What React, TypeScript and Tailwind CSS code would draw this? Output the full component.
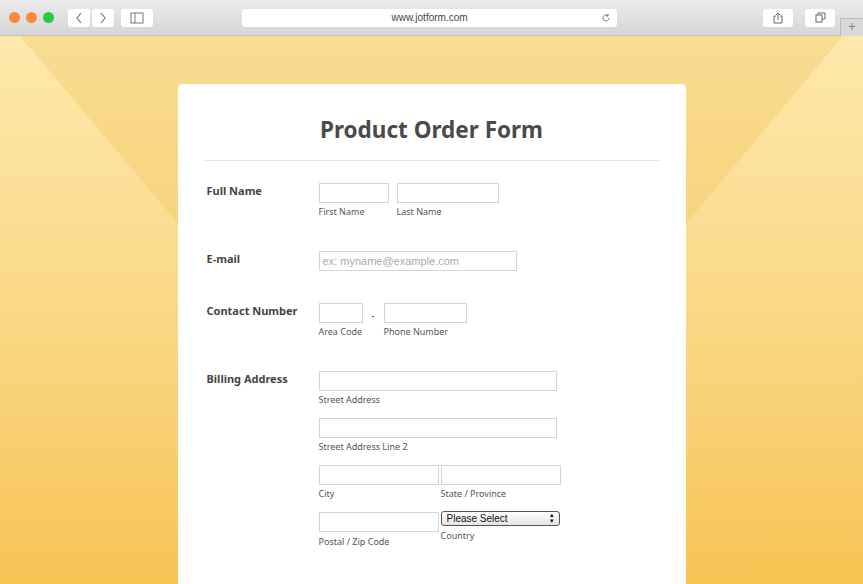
import React from "react";

const Input = ({ w, ph }: { w: string; ph?: string }) => (
  <div className={`${w} h-[20px] border border-[#d4d4d4] bg-white text-[11px] text-[#aaa] leading-[18px] pl-[3px]`} style={{ fontFamily: "'Liberation Sans', Arial, sans-serif" }}>
    {ph}
  </div>
);
const Sub = ({ children, cls = "" }: { children: React.ReactNode; cls?: string }) => (
  <div className={`text-[9px] text-[#555] mt-[3px] leading-[12px] ${cls}`}>{children}</div>
);
const Label = ({ children }: { children: React.ReactNode }) => (
  <div className="w-[112px] shrink-0 text-[11px] font-bold text-[#444]">{children}</div>
);

export default function App() {
  return (
    <div className="w-[863px] h-[584px] overflow-hidden relative flex flex-col" style={{ fontFamily: "'Noto Sans', 'Open Sans', sans-serif" }}>
      <div className="h-[36px] shrink-0 bg-gradient-to-b from-[#ebebeb] to-[#d6d6d6] border-b border-[#c4c4c4] flex items-center px-[9px] relative z-10">
        <div className="flex gap-[6px]">
          <div className="w-[11px] h-[11px] rounded-full bg-[#fc8a3a]" />
          <div className="w-[11px] h-[11px] rounded-full bg-[#fc8a3a]" />
          <div className="w-[11px] h-[11px] rounded-full bg-[#27c93f]" />
        </div>
        <div className="ml-[14px] flex gap-[2px]">
          <div className="w-[22px] h-[18px] bg-white rounded-[3px] flex items-center justify-center">
            <svg width="8" height="12" viewBox="0 0 8 12"><path d="M6 1L2 6l4 5" stroke="#777" fill="none" strokeWidth="1.2" /></svg>
          </div>
          <div className="w-[22px] h-[18px] bg-white rounded-[3px] flex items-center justify-center">
            <svg width="8" height="12" viewBox="0 0 8 12"><path d="M2 1l4 5-4 5" stroke="#777" fill="none" strokeWidth="1.2" /></svg>
          </div>
        </div>
        <div className="ml-[7px] w-[32px] h-[18px] bg-white rounded-[3px] flex items-center justify-center">
          <svg width="14" height="12" viewBox="0 0 14 12"><rect x="1" y="1" width="12" height="10" stroke="#777" fill="none" /><path d="M5 1v10" stroke="#777" /></svg>
        </div>
        <div className="ml-[89px] w-[375px] h-[18px] bg-white rounded-[3px] relative flex items-center justify-center text-[10px] text-[#444]" style={{ fontFamily: "'Liberation Sans', Arial, sans-serif" }}>
          www.jotform.com
          <svg className="absolute right-[6px] top-[4px]" width="10" height="10" viewBox="0 0 10 10"><path d="M8 5a3 3 0 1 1-1-2.3M7 1v2h-2" stroke="#777" fill="none" /></svg>
        </div>
        <div className="ml-auto mr-[19px] flex gap-[12px]">
          <div className="w-[30px] h-[18px] bg-white rounded-[3px] flex items-center justify-center">
            <svg width="10" height="12" viewBox="0 0 10 12"><path d="M3 4H1v7h8V4H7M5 1v7M3 3l2-2 2 2" stroke="#666" fill="none" /></svg>
          </div>
          <div className="w-[30px] h-[18px] bg-white rounded-[3px] flex items-center justify-center">
            <svg width="11" height="11" viewBox="0 0 11 11"><rect x="1" y="3" width="6" height="7" stroke="#666" fill="none" /><path d="M3 3V1h7v6H7" stroke="#666" fill="none" /></svg>
          </div>
        </div>
        <div className="absolute right-0 top-[18px] w-[23px] h-[18px] border-l border-t border-[#bbb] bg-[#d9d9d9] text-[#888] text-[14px] leading-[16px] text-center">+</div>
      </div>
      <div className="flex-1 relative bg-gradient-to-b from-[#f9dc92] to-[#f6c451] flex justify-center">
        <svg className="absolute inset-0" width="863" height="548" viewBox="0 0 863 548">
          <defs>
            <linearGradient id="g" x1="0" y1="0" x2="0" y2="1">
              <stop offset="0" stopColor="#fee9ad" />
              <stop offset="1" stopColor="#fbd98a" stopOpacity="0" />
            </linearGradient>
          </defs>
          <polygon points="0,0 20,0 180,190 180,548 0,548" fill="url(#g)" opacity="0.9" />
          <polygon points="863,0 843,0 684,190 684,548 863,548" fill="url(#g)" opacity="0.9" />
        </svg>
        <div className="relative mt-[48px] w-[508px] bg-white rounded-t-[4px] px-[27px]">
          <div className="text-center text-[22.5px] font-bold text-[#4a4a4a] pt-[29px] pb-[13px]">Product Order Form</div>
          <div className="border-t border-[#e0e0e0]" />
          <div className="pl-[2px]">
            <div className="flex mt-[22px]">
              <Label>Full Name</Label>
              <div>
                <Input w="w-[70px]" />
                <Sub>First Name</Sub>
              </div>
              <div className="ml-[8px]">
                <Input w="w-[102px]" />
                <Sub>Last Name</Sub>
              </div>
            </div>
            <div className="flex mt-[33px]">
              <Label>E-mail</Label>
              <Input w="w-[198px]" ph="ex: myname@example.com" />
            </div>
            <div className="flex mt-[32px]">
              <Label>Contact Number</Label>
              <div>
                <Input w="w-[44px]" />
                <Sub>Area Code</Sub>
              </div>
              <div className="w-[21px] text-center text-[11px] text-[#555] leading-[24px]">-</div>
              <div>
                <Input w="w-[83px]" />
                <Sub>Phone Number</Sub>
              </div>
            </div>
            <div className="flex mt-[33px]">
              <Label>Billing Address</Label>
              <div>
                <Input w="w-[238px]" />
                <Sub>Street Address</Sub>
                <div className="mt-[12px]"><Input w="w-[238px]" /></div>
                <Sub>Street Address Line 2</Sub>
                <div className="flex gap-[2px] mt-[12px]">
                  <div><Input w="w-[120px]" /><Sub>City</Sub></div>
                  <div><Input w="w-[120px]" /><Sub>State / Province</Sub></div>
                </div>
                <div className="flex gap-[2px] mt-[12px]">
                  <div><Input w="w-[120px]" /><Sub cls="mt-[4px]">Postal / Zip Code</Sub></div>
                  <div>
                    <div className="w-[119px] h-[15px] border border-[#555] rounded-[3px] bg-gradient-to-b from-white to-[#e4e4e4] flex items-center justify-between px-[5px] text-[10px] text-[#111] mt-[-1px]" style={{ fontFamily: "'Liberation Sans', Arial, sans-serif" }}>
                      <span>Please Select</span>
                      <span className="text-[7px] leading-[6px] flex flex-col">▴<br />▾</span>
                    </div>
                    <Sub cls="mt-[4px]">Country</Sub>
                  </div>
                </div>
              </div>
            </div>
          </div>
        </div>
      </div>
    </div>
  );
}
